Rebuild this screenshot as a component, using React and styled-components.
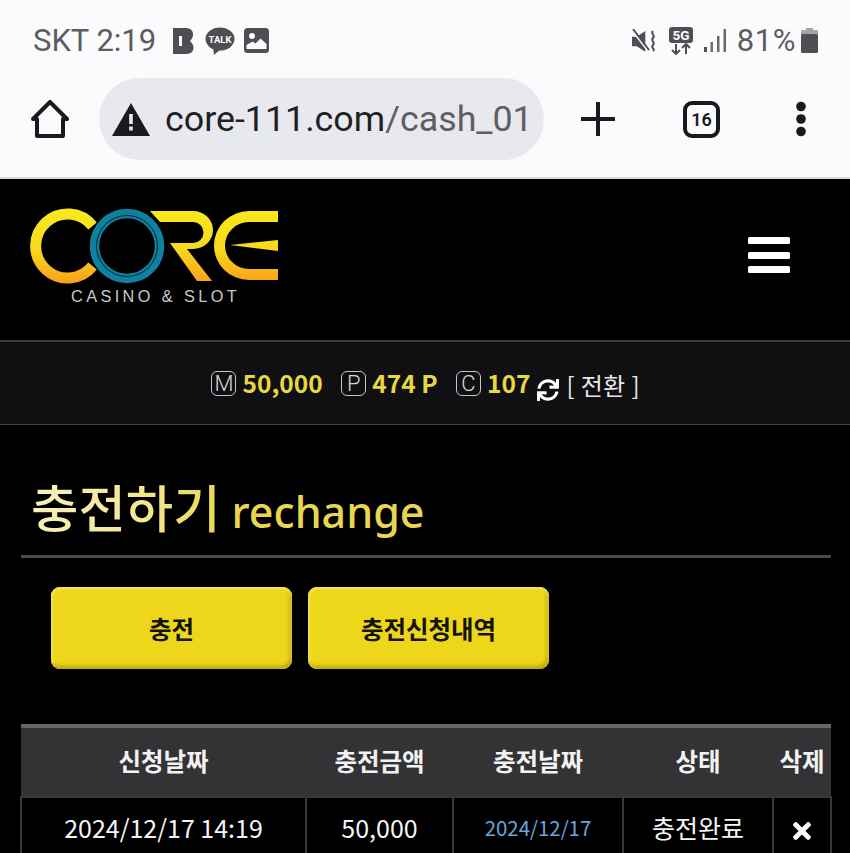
import React from "react";
import styled, { createGlobalStyle } from "styled-components";
import { FaSync, FaTimes } from "react-icons/fa";

const GlobalStyle = createGlobalStyle`
  html, body { margin: 0; padding: 0; background: #000; overflow: hidden; }
  * { box-sizing: border-box; }
`;

const KR = `"Noto Sans CJK KR", "Noto Sans", sans-serif`;

const Page = styled.div`
  width: 850px;
  height: 853px;
  overflow: hidden;
  background: #000;
  font-family: ${KR};
  color: #fff;
`;

const Chrome = styled.div`
  height: 179px;
  background: #fbfbfe;
  border-bottom: 2px solid #d9d9dc;
`;

const StatusBar = styled.div`
  height: 78px;
  padding: 3px 32px 0 33px;
  display: flex;
  align-items: center;
  justify-content: space-between;
  font-family: Roboto, sans-serif;
  font-size: 31px;
  color: #5c5c60;
`;

const StatusGroup = styled.div`
  display: flex;
  align-items: center;
`;

const StatusText = styled.span`
  line-height: 1;
  margin-left: ${(p) => p.$ml || 0}px;
  letter-spacing: ${(p) => p.$ls || 0}px;
`;

const Toolbar = styled.div`
  display: flex;
  align-items: center;
  height: 82px;
  padding-left: 31px;
`;

const UrlPill = styled.div`
  width: 445px;
  height: 82px;
  margin-left: 30px;
  border-radius: 41px;
  background: #e8e9ef;
  display: flex;
  align-items: center;
  padding-left: 13px;
  gap: 15px;
  font-family: Roboto, sans-serif;
  font-size: 35.8px;
  white-space: nowrap;
  overflow: hidden;
`;

const UrlHost = styled.span`
  color: #1f1f24;
`;

const UrlPath = styled.span`
  color: #5e5e64;
`;

const ToolIcon = styled.svg`
  display: block;
  flex: none;
  margin-left: ${(p) => p.$ml || 0}px;
`;

const TabCount = styled.div`
  flex: none;
  width: 37px;
  height: 37px;
  margin-left: 68px;
  border: 4px solid #1a1a1e;
  border-radius: 9px;
  display: flex;
  align-items: center;
  justify-content: center;
  font-family: Roboto, sans-serif;
  font-size: 18px;
  font-weight: 600;
  color: #1a1a1e;
`;

const Header = styled.header`
  height: 161px;
  padding: 26px 60px 0 30px;
  display: flex;
  justify-content: space-between;
  align-items: flex-start;
`;

const LogoBox = styled.div`
  width: 250px;
`;

const LogoTagline = styled.div`
  margin-top: 1px;
  margin-left: 41px;
  font-family: "Liberation Sans", sans-serif;
  font-size: 16.3px;
  line-height: 16px;
  letter-spacing: 3.4px;
  color: #c9c9c9;
  white-space: nowrap;
`;

const Burger = styled.div`
  margin-top: 32px;
  display: flex;
  flex-direction: column;
  gap: 7.5px;
`;

const BurgerBar = styled.span`
  display: block;
  width: 42px;
  height: 7px;
  border-radius: 1.5px;
  background: #fff;
`;

const BalanceBar = styled.div`
  height: 85px;
  background: #100f11;
  border-top: 2px solid #3c3c3e;
  border-bottom: 1px solid #444446;
  display: flex;
  align-items: center;
  justify-content: center;
  padding-left: 1px;
`;

const Badge = styled.span`
  width: 25px;
  height: 25px;
  margin-right: 6px;
  margin-left: ${(p) => p.$ml || 0}px;
  border: 1.5px solid #c8c8c8;
  border-radius: 6px;
  display: flex;
  align-items: center;
  justify-content: center;
  font-family: Roboto, sans-serif;
  font-size: 22px;
  font-weight: 300;
  color: #d8d8d8;
`;

const Amount = styled.span`
  font-size: 24.5px;
  font-weight: 700;
  line-height: 1;
  color: #e8d83f;
`;

const SwapIcon = styled(FaSync)`
  width: 22px;
  height: 22px;
  margin: 13px 7px 0 7px;
  color: #fff;
`;

const SwapText = styled.span`
  font-size: 24px;
  line-height: 1;
  margin-top: 4px;
  color: #e8e8e8;
  word-spacing: 1px;
`;

const Content = styled.main`
  padding: 0 19px 0 21px;
`;

const Title = styled.h2`
  margin: 0;
  height: 133px;
  padding: 48px 0 0 10px;
  border-bottom: 3px solid #4a4a4d;
  display: flex;
  align-items: baseline;
  gap: 11px;
  font-weight: 500;
  line-height: 66px;
`;

const TitleKo = styled.span`
  font-size: 51.5px;
  background: linear-gradient(90deg, #f8f1bb 0%, #f3e78f 60%, #e9d64f 100%);
  -webkit-background-clip: text;
  background-clip: text;
  color: transparent;
`;

const TitleEn = styled.span`
  font-family: "Noto Sans", sans-serif;
  font-size: 43px;
  color: #e8d651;
`;

const Buttons = styled.div`
  display: flex;
  gap: 16px;
  padding: 29px 0 0 30px;
`;

const YellowButton = styled.button`
  width: 241px;
  height: 82px;
  border: 0;
  border-radius: 9px;
  background: #eed71a;
  box-shadow: inset 0 2px 3px #f6e65a, inset -2px -3px 4px #b9a312, inset 2px 0 3px #f3e04a;
  font-family: ${KR};
  font-size: 24.5px;
  font-weight: 700;
  color: #151306;
`;

const Table = styled.table`
  width: 810px;
  margin: 55px 0 0 -1px;
  table-layout: fixed;
  border-collapse: collapse;
`;

const Col = styled.col`
  width: ${(p) => p.$w}px;
`;

const Th = styled.th`
  height: 71px;
  padding: 0 0 3px;
  background: #333235;
  border-top: 4px solid #666668;
  font-size: 24.5px;
  font-weight: 700;
  color: #f2f2f2;
  white-space: nowrap;
`;

const Td = styled.td`
  height: 66px;
  padding: 0 0 6px;
  text-align: center;
  border: 2px solid #38383a;
  font-size: ${(p) => p.$size || 25}px;
  font-weight: 400;
  color: ${(p) => p.$color || "#f4f4f4"};
  white-space: nowrap;
`;

const DeleteIcon = styled(FaTimes)`
  width: 22px;
  height: 26px;
  vertical-align: middle;
  color: #fff;
`;

function BlogIcon() {
  return (
    <ToolIcon width="22" height="26" viewBox="0 0 22 26" $ml={16}>
      <path
        fill="#4f4f53"
        fillRule="evenodd"
        d="M1 0h12c5 0 8 2 8 6.500 0 3-1.500 5-3 6.500 1.500 1.500 3.500 3.500 3.500 6.500 0 4.500-3 6.500-8 6.500H1zM7 8v10h3V8z"
      />
    </ToolIcon>
  );
}

function TalkIcon() {
  return (
    <ToolIcon width="30" height="28" viewBox="0 0 30 28" $ml={11}>
      <ellipse cx="15" cy="12" rx="14.500" ry="11.500" fill="#4f4f53" />
      <path d="M8 20l1 8 7-6z" fill="#4f4f53" />
      <text x="15" y="15.500" textAnchor="middle" fontFamily="Roboto, sans-serif" fontWeight="700" fontSize="9.500" fill="#fbfbfe">
        TALK
      </text>
    </ToolIcon>
  );
}

function PictureIcon() {
  return (
    <ToolIcon width="25" height="25" viewBox="0 0 25 25" $ml={9}>
      <rect width="25" height="25" rx="3.500" fill="#4f4f53" />
      <circle cx="8" cy="8" r="3" fill="#fbfbfe" />
      <path d="M2.500 21v-4l6-3.500 3 2 5-5 6 5.500v5z" fill="#fbfbfe" />
    </ToolIcon>
  );
}

function MuteIcon() {
  return (
    <ToolIcon width="24" height="24" viewBox="0 0 24 24">
      <path d="M0 7h5l9-6v22l-9-6H0z" fill="#4f4f53" transform="translate(0 1) scale(.95)" />
      <path d="M0 1l16 21" stroke="#fbfbfe" strokeWidth="2" />
      <path d="M1 0l16 21" stroke="#4f4f53" strokeWidth="2" />
      <path d="M21 2c-3 3 3 4 0 7s3 4 0 7 3 4 0 6" fill="none" stroke="#4f4f53" strokeWidth="2" />
    </ToolIcon>
  );
}

function FiveGIcon() {
  return (
    <ToolIcon width="24" height="28" viewBox="0 0 24 28" $ml={13}>
      <rect width="24" height="16" rx="3" fill="#4f4f53" />
      <text x="12" y="13" textAnchor="middle" fontFamily="Roboto, sans-serif" fontWeight="700" fontSize="13.500" fill="#fbfbfe">
        5G
      </text>
      <path d="M7 17v10M3 23l4 4 4-4M17 27V17M13 21l4-4 4 4" fill="none" stroke="#4f4f53" strokeWidth="2" />
    </ToolIcon>
  );
}

function SignalIcon() {
  return (
    <ToolIcon width="22" height="23" viewBox="0 0 22 23" $ml={11}>
      <rect x="0" y="18" width="3" height="5" fill="#4f4f53" />
      <rect x="6.500" y="13" width="2.500" height="10" fill="#6a6a6e" />
      <rect x="13" y="7" width="2.500" height="16" fill="#6a6a6e" />
      <rect x="19.500" y="0" width="2.500" height="23" fill="#6a6a6e" />
    </ToolIcon>
  );
}

function BatteryIcon() {
  return (
    <ToolIcon width="17" height="25" viewBox="0 0 17 25" $ml={5}>
      <rect x="5" y="0" width="7" height="3" fill="#a5a5a8" />
      <rect x="0" y="2" width="17" height="5" rx="1" fill="#a5a5a8" />
      <rect x="0" y="6" width="17" height="19" rx="1.500" fill="#4f4f53" />
    </ToolIcon>
  );
}

function CoreLogo() {
  return (
    <svg width="250" height="82" viewBox="30 205 250 82" style={{ display: "block" }}>
      <defs>
        <linearGradient id="gold" gradientUnits="userSpaceOnUse" x1="0" y1="209" x2="0" y2="283">
          <stop offset="0" stopColor="#f8ea1c" />
          <stop offset="0.55" stopColor="#f8d81c" />
          <stop offset="1" stopColor="#f9a01a" />
        </linearGradient>
      </defs>
      <path d="M92.600 226A32 32 0 1 0 92.600 266" fill="none" stroke="url(#gold)" strokeWidth="11" />
      <circle cx="127" cy="246" r="38.500" fill="#000" />
      <circle cx="127" cy="246" r="32.500" fill="none" stroke="#10809f" strokeWidth="9.500" />
      <circle cx="127" cy="246" r="30.500" fill="none" stroke="#04282f" strokeWidth="1" />
      <path
        fill="url(#gold)"
        d="M150 211H193A20 19 0 0 1 193 249H187L212 281H197L170 243H193A10.500 10.500 0 0 0 193 222H160Z"
      />
      <path
        fill="url(#gold)"
        d="M278 211H249A35 34.500 0 0 0 249 280H278V269H249A24 23.500 0 0 1 249 222H278ZM230 245L278 240V251Z"
      />
    </svg>
  );
}

export default function App() {
  return (
    <Page>
      <GlobalStyle />
      <Chrome>
        <StatusBar>
          <StatusGroup>
            <StatusText>SKT 2:19</StatusText>
            <BlogIcon />
            <TalkIcon />
            <PictureIcon />
          </StatusGroup>
          <StatusGroup>
            <MuteIcon />
            <FiveGIcon />
            <SignalIcon />
            <StatusText $ml={11} $ls={0.6}>81%</StatusText>
            <BatteryIcon />
          </StatusGroup>
        </StatusBar>
        <Toolbar>
          <ToolIcon width="38" height="38" viewBox="0 0 38 38">
            <path
              d="M6 36V19H2L19 2l17 17h-4v17z"
              fill="none"
              stroke="#1a1a1e"
              strokeWidth="4"
              strokeLinejoin="round"
            />
          </ToolIcon>
          <UrlPill>
            <ToolIcon width="38" height="33" viewBox="0 0 38 33">
              <path d="M19 0l19 33H0z" fill="#1a1a1e" />
              <rect x="17.200" y="11" width="3.600" height="10" fill="#e8e9ef" />
              <rect x="17.200" y="23.500" width="3.600" height="4" fill="#e8e9ef" />
            </ToolIcon>
            <span>
              <UrlHost>core-111.com</UrlHost>
              <UrlPath>/cash_01</UrlPath>
            </span>
          </UrlPill>
          <ToolIcon width="34" height="34" viewBox="0 0 34 34" $ml={37}>
            <path d="M17 1v32M1 17h32" stroke="#1a1a1e" strokeWidth="4" strokeLinecap="round" />
          </ToolIcon>
          <TabCount>16</TabCount>
          <ToolIcon width="12" height="36" viewBox="0 0 12 36" $ml={75}>
            <circle cx="6" cy="5.500" r="4.800" fill="#1a1a1e" />
            <circle cx="6" cy="18" r="4.800" fill="#1a1a1e" />
            <circle cx="6" cy="30.500" r="4.800" fill="#1a1a1e" />
          </ToolIcon>
        </Toolbar>
      </Chrome>

      <Header>
        <LogoBox>
          <CoreLogo />
          <LogoTagline>CASINO &amp; SLOT</LogoTagline>
        </LogoBox>
        <Burger>
          <BurgerBar />
          <BurgerBar />
          <BurgerBar />
        </Burger>
      </Header>

      <BalanceBar>
        <Badge>M</Badge>
        <Amount>50,000</Amount>
        <Badge $ml={18.5}>P</Badge>
        <Amount>474 P</Amount>
        <Badge $ml={18.5}>C</Badge>
        <Amount>107</Amount>
        <SwapIcon />
        <SwapText>[ 전환 ]</SwapText>
      </BalanceBar>

      <Content>
        <Title>
          <TitleKo>충전하기</TitleKo>
          <TitleEn>rechange</TitleEn>
        </Title>
        <Buttons>
          <YellowButton>충전</YellowButton>
          <YellowButton>충전신청내역</YellowButton>
        </Buttons>
        <Table>
          <colgroup>
            <Col $w={285} />
            <Col $w={147} />
            <Col $w={170} />
            <Col $w={150} />
            <Col $w={58} />
          </colgroup>
          <thead>
            <tr>
              <Th>신청날짜</Th>
              <Th>충전금액</Th>
              <Th>충전날짜</Th>
              <Th>상태</Th>
              <Th>삭제</Th>
            </tr>
          </thead>
          <tbody>
            <tr>
              <Td>2024/12/17 14:19</Td>
              <Td>50,000</Td>
              <Td $size={20.4} $color="#6ba6dc">2024/12/17</Td>
              <Td>충전완료</Td>
              <Td><DeleteIcon /></Td>
            </tr>
          </tbody>
        </Table>
      </Content>
    </Page>
  );
}
